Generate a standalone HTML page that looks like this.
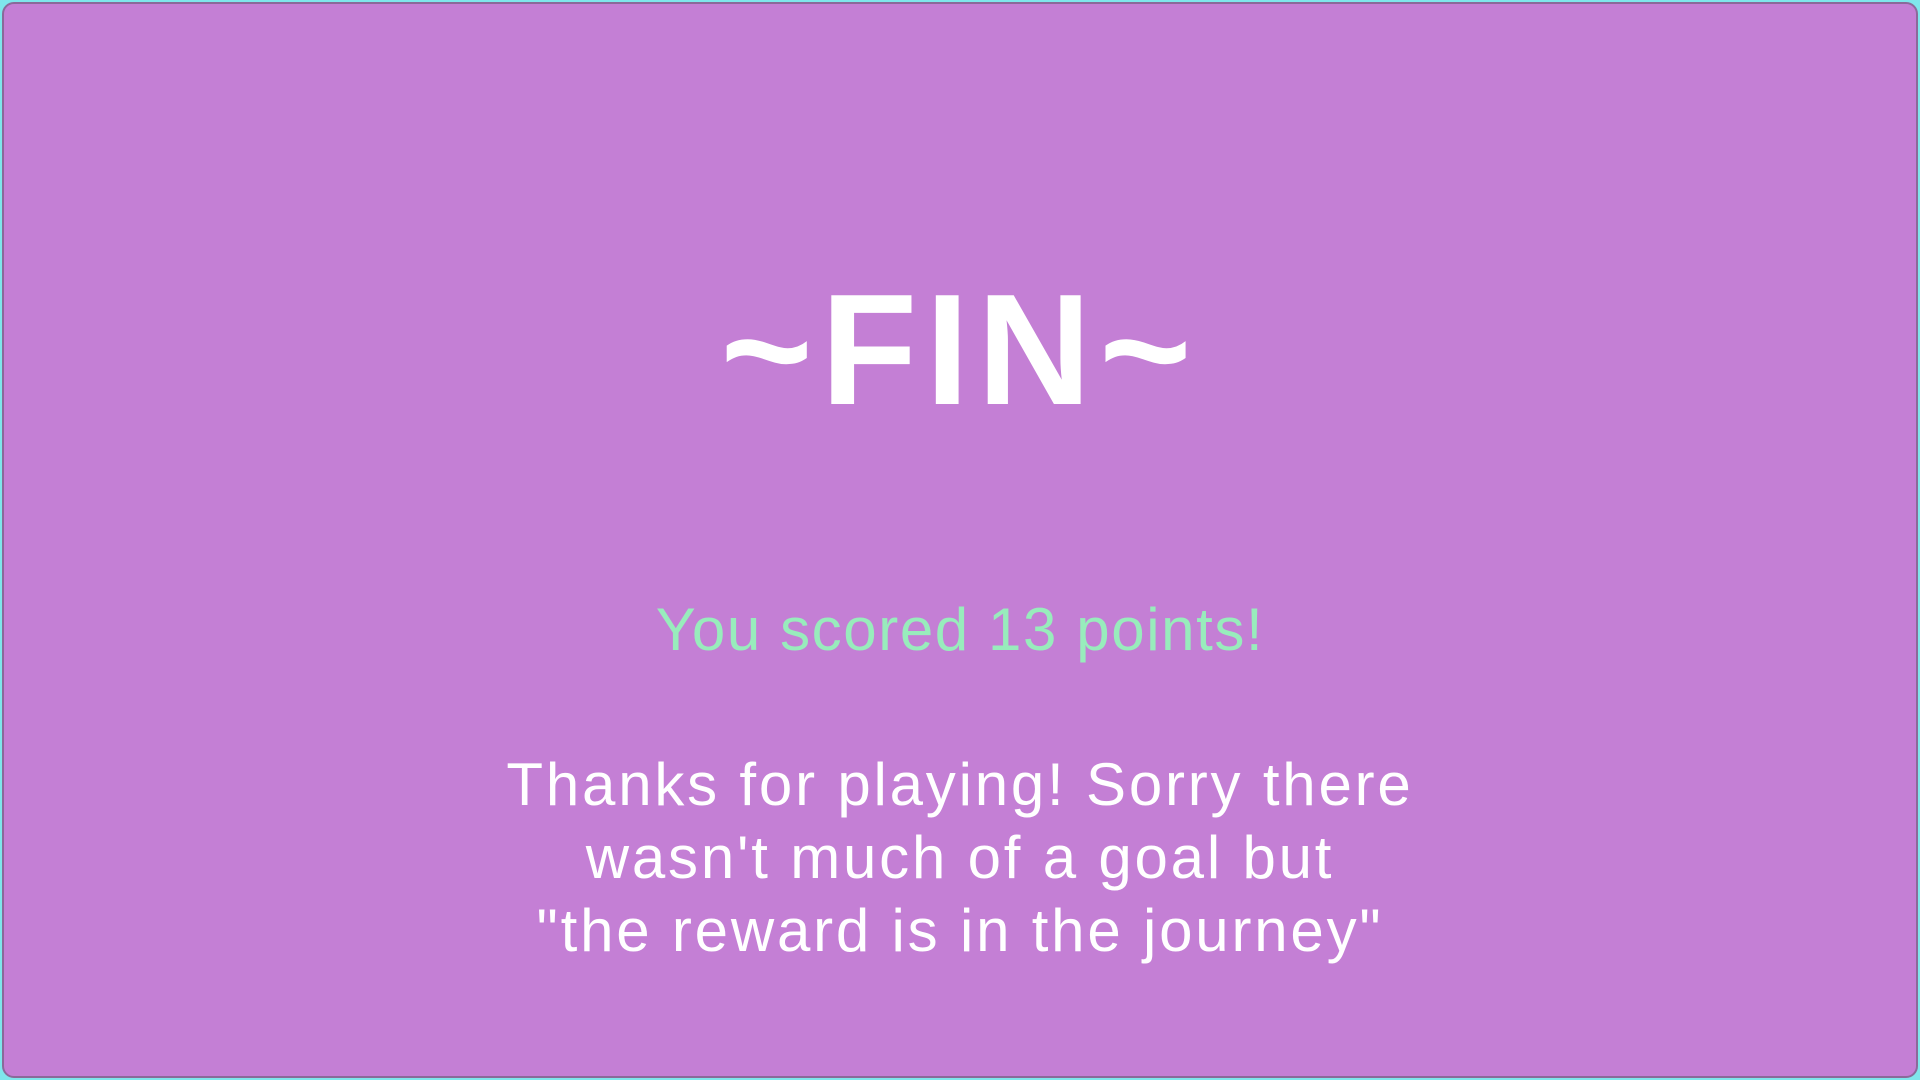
<!DOCTYPE html>
<html><head><meta charset="utf-8"><style>
html,body{margin:0;padding:0;width:1920px;height:1080px;overflow:hidden;background:#7fe6ec;}
.frame{position:absolute;left:2px;top:2px;width:1912px;height:1072px;border:2px solid #8a6a9a;border-radius:12px;background:#c47fd5;}
.t{position:absolute;left:0;width:1920px;text-align:center;font-family:"Liberation Sans",sans-serif;}
.fin{top:265px;font-size:158px;font-weight:bold;color:#fff;letter-spacing:8px;line-height:170px;}
.score{top:590px;font-size:60px;color:#98ecbc;line-height:80px;letter-spacing:1.6px;}
.body{top:748px;font-size:60px;color:#fff;line-height:73px;letter-spacing:2.8px;}
</style></head><body>
<div class="frame"></div>
<div class="t fin">~FIN~</div>
<div class="t score">You scored 13 points!</div>
<div class="t body">Thanks for playing! Sorry there<br>wasn't much of a goal but<br>"the reward is in the journey"</div>
</body></html>
